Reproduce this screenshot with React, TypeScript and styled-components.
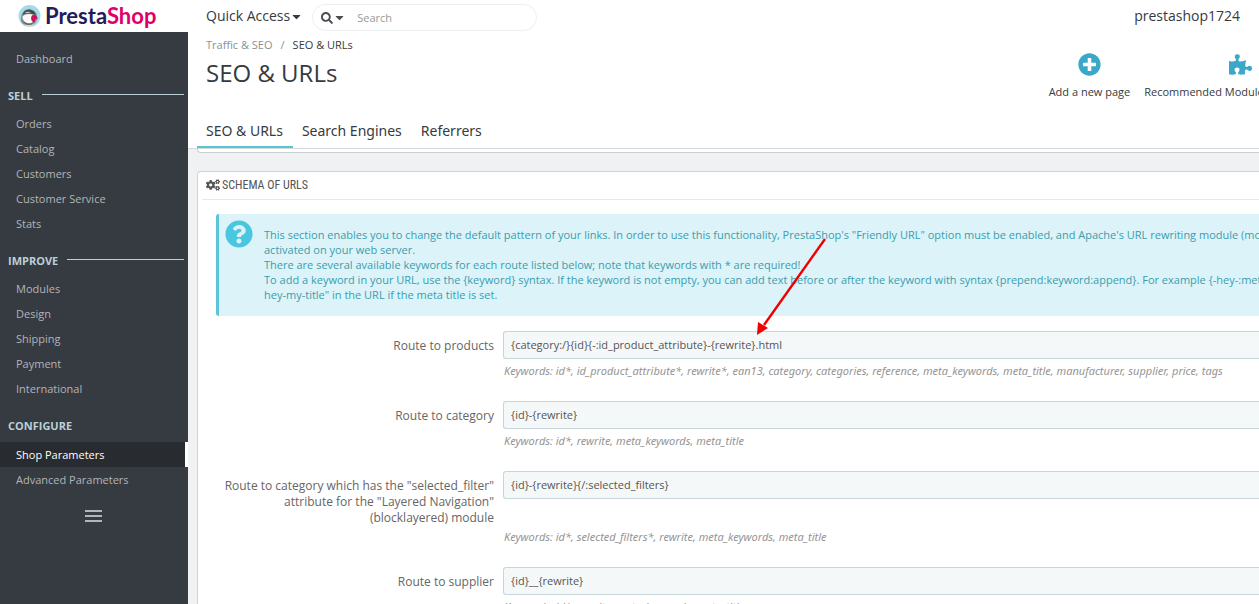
import React from "react";
import styled, { createGlobalStyle, css } from "styled-components";
import {
  FaCaretDown,
  FaCogs,
  FaPlusCircle,
  FaPuzzlePiece,
  FaQuestionCircle,
  FaSearch,
} from "react-icons/fa";

const GlobalStyle = createGlobalStyle`
  * { box-sizing: border-box; }
  body {
    margin: 0;
    overflow: hidden;
    background: #eff1f2;
    color: #363a41;
    font: 12px/16px "Open Sans", "Liberation Sans", sans-serif;
  }
  a { color: inherit; text-decoration: none; }
  ul { list-style: none; margin: 0; padding: 0; }
  h1, h2, p { margin: 0; font-weight: 400; }
  button, input { font: inherit; color: inherit; }
`;

const Page = styled.div`
  display: flex;
  height: 100vh;
  overflow: hidden;
`;

const Sidebar = styled.aside`
  flex: 0 0 188px;
  display: flex;
  flex-direction: column;
  background: #363a41;
`;

const Brand = styled.a`
  display: flex;
  align-items: center;
  gap: 4px;
  height: 32px;
  padding-left: 18px;
  background: #fff;
`;

const BrandName = styled.span`
  font: 700 22px/32px Lato, sans-serif;
  color: #251b5b;
`;

const BrandAccent = styled.span`
  color: #df0067;
`;

const Menu = styled.nav`
  padding-top: 14px;
`;

const MenuTitle = styled.h2`
  display: flex;
  align-items: center;
  gap: 9px;
  height: 40px;
  padding: 9px 4px 0 8px;
  color: #bad0d9;
  font-size: 11px;
  font-weight: 700;
  &:last-of-type { height: 41px; }
`;

const Rule = styled.span`
  flex: 1;
  height: 1px;
  margin-bottom: 3px;
  background: #bad0d9;
`;

const MenuLink = styled.a<{ $active?: boolean }>`
  display: block;
  height: 25px;
  padding-left: 16px;
  line-height: 25px;
  font-size: 11px;
  color: #b3b5b8;
  ${(p) =>
    p.$active &&
    css`
      color: #fff;
      background: #282b30;
      border-right: 3px solid #fff;
    `}
`;

const Collapse = styled.button`
  display: flex;
  align-self: center;
  margin: 18px 2px 0 0;
  padding: 0;
  border: 0;
  background: none;
  color: #b3b5b8;
`;

const Main = styled.div`
  flex: 1;
  min-width: 0;
  display: flex;
  flex-direction: column;
`;

const Header = styled.header`
  flex: none;
  height: 149px;
  padding-left: 9px;
  overflow: hidden;
  background: #fff;
  border-bottom: 1px solid #d3d8db;
`;

const TopBar = styled.div`
  display: flex;
  align-items: center;
  height: 36px;
  padding: 0 19px 4px 9px;
  font-size: 14px;
`;

const QuickAccess = styled.button`
  display: flex;
  align-items: center;
  padding: 0;
  border: 0;
  background: none;
`;

const SearchBox = styled.form`
  display: flex;
  align-items: center;
  width: 225px;
  height: 27px;
  margin: 3px auto 0 9px;
  border: 1px solid #eceeef;
  border-radius: 14px;
  font-size: 11px;
`;

const SearchScope = styled.button`
  display: flex;
  align-items: center;
  padding: 0 0 0 8px;
  border: 0;
  background: none;
  color: #4a4d52;
`;

const SearchInput = styled.input`
  flex: 1;
  min-width: 0;
  padding: 0 11px;
  border: 0;
  background: none;
  outline: 0;
  &::placeholder { color: #999; opacity: 1; }
`;

const ShopName = styled.a`
  font-size: 14px;
`;

const TitleRow = styled.div`
  display: flex;
  justify-content: space-between;
  height: 77px;
  padding-left: 9px;
`;

const Crumbs = styled.nav`
  display: flex;
  gap: 8px;
  padding-top: 1px;
  font-size: 11px;
`;

const Muted = styled.span`
  color: #8b9196;
`;

const Title = styled.h1`
  padding-top: 4px;
  font-size: 24px;
  line-height: 32px;
`;

const Actions = styled.div`
  display: flex;
  gap: 14px;
  margin-right: -77px;
  padding-top: 17px;
`;

const Action = styled.a`
  display: flex;
  flex-direction: column;
  align-items: center;
  gap: 8px;
  font-size: 11px;
  white-space: nowrap;
  svg { color: #3ba8c8; }
`;

const Tabs = styled.nav`
  display: flex;
  height: 36px;
  font-family: "Noto Sans", sans-serif;
`;

const Tab = styled.a<{ $active?: boolean }>`
  height: 36px;
  padding: 0 10px 0 9px;
  line-height: 36px;
  font-size: 14px;
  border-bottom: 3px solid ${(p) => (p.$active ? "#5bc4d6" : "transparent")};
`;

const Content = styled.main`
  flex: 1;
  min-height: 0;
  padding-left: 9px;
`;

const PreviousPanelEnd = styled.div`
  height: 4px;
  margin-bottom: 18px;
  background: #fff;
  border: 1px solid #c9ced1;
  border-width: 0 0 1px 1px;
  border-radius: 0 0 0 4px;
`;

const Panel = styled.section`
  padding-left: 4px;
  background: #fff;
  border: 1px solid #cfd4d7;
  border-width: 1px 0 0 1px;
  border-radius: 4px 0 0 0;
`;

const PanelHeading = styled.h2`
  display: flex;
  align-items: center;
  gap: 2px;
  height: 28px;
  padding: 0 0 2px 4px;
  border-bottom: 1px solid #e6e9eb;
  color: #555;
  font: 12px/16px "Ubuntu Condensed", "Roboto Condensed", Roboto, sans-serif;
`;

const Alert = styled.div`
  display: flex;
  gap: 11px;
  height: 102px;
  margin: 14px 0 15px 14px;
  padding: 6px 0 0 6px;
  overflow: hidden;
  background: #dcf4f9;
  border-left: 3px solid #5bc4d6;
  border-radius: 3px 0 0 3px;
  color: #3b9cad;
  white-space: nowrap;
`;

const AlertIcon = styled(FaQuestionCircle)`
  flex: none;
  color: #4ac7e0;
`;

const AlertText = styled.div`
  padding-top: 7px;
  font-size: 11px;
  line-height: 15px;
`;

const Field = styled.div`
  display: grid;
  grid-template-columns: 292px 1fr;
  column-gap: 9px;
  margin-bottom: 22px;
`;

const FieldLabel = styled.label`
  margin-bottom: -1px;
  padding: 7px 0 0 16px;
  text-align: right;
  font-size: 12px;
  line-height: 16px;
  color: #666;
`;

const FieldInput = styled.input`
  width: 100%;
  height: 28px;
  padding: 0 7px 1px;
  border: 1px solid #c7d6db;
  border-right: 0;
  border-radius: 3px 0 0 3px;
  background: #f5f8f9;
  color: #555;
  font-size: 11px;
`;

const Hint = styled.p`
  grid-column: 2;
  padding: 4px 0 0 1px;
  color: #959595;
  font-family: "Noto Sans", sans-serif;
  font-size: 11px;
  font-style: italic;
  white-space: nowrap;
`;

const Arrow = styled.svg`
  position: absolute;
  left: 755px;
  top: 236px;
  pointer-events: none;
`;

const Puffin = () => (
  <svg width="23" height="24" viewBox="0 0 46 48" aria-hidden="true">
    <circle cx="23" cy="24" r="22" fill="#a4dbe8" />
    <path d="M6 34C4 20 12 11 22 11c9 0 15 5 16 13 1 9-3 15-9 18H15c-5-2-8-4-9-8z" fill="#8b8f94" />
    <path d="M9 25c6-6 13-6 20-4 4 6 3 15-4 18-8 1-16-4-16-14z" fill="#fdfbf8" />
    <path d="M9 21c2-8 10-12 18-9 5 2 8 5 9 10-9-3-17-4-27-1z" fill="#4a4a4e" />
    <path d="M13 18c4-3 9-3 13-1-5 1-8 1-13 1z" fill="#c9cacc" />
    <path d="M28 23c6-3 12 1 11 8l-4-1-2 7c-6-1-9-9-5-14z" fill="#c8125c" />
    <path d="M9 32c5 6 13 9 21 5-1 3-4 5-8 5-6 0-11-4-13-10z" fill="#65666b" />
    <path d="M14 41c6 2 12 2 18-1-2 4-5 6-9 6s-7-2-9-5z" fill="#e0d9c2" />
  </svg>
);

const menu = [
  { title: "SELL", rule: true, items: ["Orders", "Catalog", "Customers", "Customer Service", "Stats"] },
  { title: "IMPROVE", rule: true, items: ["Modules", "Design", "Shipping", "Payment", "International"] },
  { title: "CONFIGURE", rule: false, items: ["Shop Parameters", "Advanced Parameters"] },
];

const routes = [
  {
    id: "product",
    label: "Route to products",
    value: "{category:/}{id}{-:id_product_attribute}-{rewrite}.html",
    hint: "Keywords: id*, id_product_attribute*, rewrite*, ean13, category, categories, reference, meta_keywords, meta_title, manufacturer, supplier, price, tags",
  },
  {
    id: "category",
    label: "Route to category",
    value: "{id}-{rewrite}",
    hint: "Keywords: id*, rewrite, meta_keywords, meta_title",
  },
  {
    id: "layered",
    label: 'Route to category which has the "selected_filter" attribute for the "Layered Navigation" (blocklayered) module',
    value: "{id}-{rewrite}{/:selected_filters}",
    hint: "Keywords: id*, selected_filters*, rewrite, meta_keywords, meta_title",
  },
  {
    id: "supplier",
    label: "Route to supplier",
    value: "{id}__{rewrite}",
    hint: "Keywords: id*, rewrite, meta_keywords, meta_title",
  },
];

export default function App() {
  return (
    <>
      <GlobalStyle />
      <Page>
        <Sidebar>
          <Brand href="#">
            <Puffin />
            <BrandName>
              Presta<BrandAccent>Shop</BrandAccent>
            </BrandName>
          </Brand>
          <Menu>
            <MenuLink href="#">Dashboard</MenuLink>
            {menu.map((group) => (
              <React.Fragment key={group.title}>
                <MenuTitle>
                  {group.title}
                  {group.rule && <Rule />}
                </MenuTitle>
                <ul>
                  {group.items.map((item) => (
                    <li key={item}>
                      <MenuLink href="#" $active={item === "Shop Parameters"}>
                        {item}
                      </MenuLink>
                    </li>
                  ))}
                </ul>
              </React.Fragment>
            ))}
          </Menu>
          <Collapse type="button" aria-label="Collapse menu">
            <svg width="17" height="12" viewBox="0 0 17 12" fill="currentColor">
              <path d="M0 0h17v2H0zM0 5h17v2H0zM0 10h17v2H0z" />
            </svg>
          </Collapse>
        </Sidebar>

        <Main>
          <Header>
            <TopBar>
              <QuickAccess type="button">
                Quick Access <FaCaretDown size={13} />
              </QuickAccess>
              <SearchBox>
                <SearchScope type="button" aria-label="Search scope">
                  <FaSearch size={12} />
                  <FaCaretDown size={13} />
                </SearchScope>
                <SearchInput type="text" placeholder="Search" aria-label="Search" />
              </SearchBox>
              <ShopName href="#">prestashop1724</ShopName>
            </TopBar>
            <TitleRow>
              <div>
                <Crumbs aria-label="Breadcrumb">
                  <Muted as="a" href="#">Traffic &amp; SEO</Muted>
                  <Muted>/</Muted>
                  <a href="#">SEO &amp; URLs</a>
                </Crumbs>
                <Title>SEO &amp; URLs</Title>
              </div>
              <Actions>
                <Action href="#">
                  <FaPlusCircle size={23} />
                  Add a new page
                </Action>
                <Action href="#">
                  <FaPuzzlePiece size={23} />
                  Recommended Modules and Services
                </Action>
              </Actions>
            </TitleRow>
            <Tabs>
              <Tab href="#" $active>SEO &amp; URLs</Tab>
              <Tab href="#">Search Engines</Tab>
              <Tab href="#">Referrers</Tab>
            </Tabs>
          </Header>

          <Content>
            <PreviousPanelEnd />
            <Panel>
              <PanelHeading>
                <FaCogs size={14} />
                SCHEMA OF URLS
              </PanelHeading>
              <Alert>
                <AlertIcon size={28} />
                <AlertText>
                  <p>
                    This section enables you to change the default pattern of your links. In order to use this
                    functionality, PrestaShop's "Friendly URL" option must be enabled, and Apache's URL rewriting module
                    (mod_rewrite) must be
                    <br />
                    activated on your web server.
                  </p>
                  <p>There are several available keywords for each route listed below; note that keywords with * are required!</p>
                  <p>
                    {"To add a keyword in your URL, use the {keyword} syntax. If the keyword is not empty, you can add text before or after the keyword with syntax {prepend:keyword:append}. For example {-hey-:meta_title} will add \"-"}
                    <br />
                    hey-my-title" in the URL if the meta title is set.
                  </p>
                </AlertText>
              </Alert>
              {routes.map((route) => (
                <Field key={route.id}>
                  <FieldLabel htmlFor={route.id}>{route.label}</FieldLabel>
                  <FieldInput id={route.id} type="text" defaultValue={route.value} />
                  <Hint>{route.hint}</Hint>
                </Field>
              ))}
            </Panel>
          </Content>
        </Main>
      </Page>
      <Arrow width="74" height="102" viewBox="0 0 74 102" aria-hidden="true">
        <path d="M70 3L9 89" stroke="#f00000" strokeWidth="2.4" />
        <path d="M2 99L3 86L8 89L13 92Z" fill="#f00000" />
      </Arrow>
    </>
  );
}
